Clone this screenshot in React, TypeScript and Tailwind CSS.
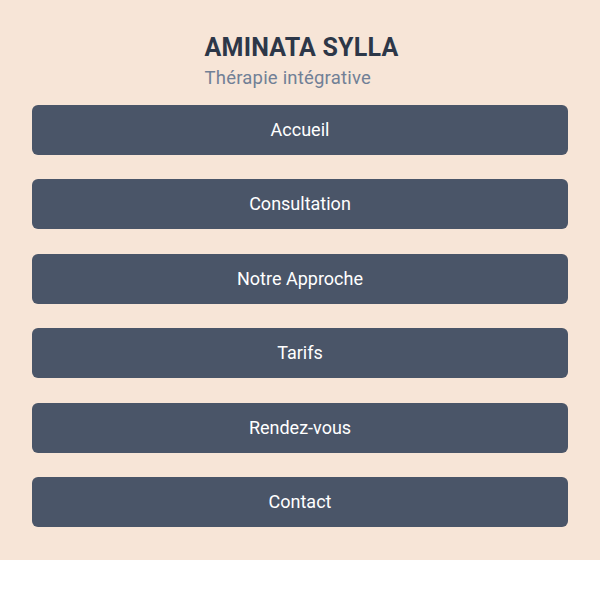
const links = ["Accueil", "Consultation", "Notre Approche", "Tarifs", "Rendez-vous", "Contact"];

export default function App() {
  return (
    <div className="min-h-[600px] bg-white" style={{ fontFamily: "Roboto, 'Liberation Sans', sans-serif" }}>
      <header className="bg-[#f7e5d7] px-8 pt-[32px] pb-[33px]">
        {/* Brand */}
        <div className="flex justify-center pl-[3px]">
          <div className="flex flex-col">
            <h1 className="text-[25px] font-bold tracking-[0.2px] text-[#2d3748] leading-8">AMINATA SYLLA</h1>
            <p className="text-[18.5px] tracking-[0.2px] text-[#718096] leading-7">Thérapie intégrative</p>
          </div>
        </div>

        {/* Menu */}
        <nav className="mt-[13px] flex flex-col gap-[24.4px]">
          {links.map((label) => (
            <a
              key={label}
              href="#"
              className="flex h-[50px] items-center justify-center rounded-md bg-[#4a5568] text-lg text-white"
            >
              {label}
            </a>
          ))}
        </nav>
      </header>
    </div>
  );
}
